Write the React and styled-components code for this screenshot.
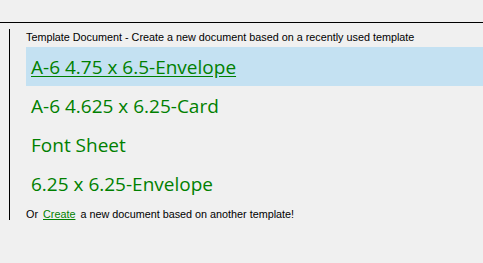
import React from 'react';
import styled, { createGlobalStyle } from 'styled-components';

const GlobalStyle = createGlobalStyle`
  html, body {
    margin: 0;
    padding: 0;
    background: #f0f0f0;
  }
  body {
    font-family: 'Liberation Sans', Arial, sans-serif;
  }
`;

const templates = [
  'A-6 4.75 x 6.5-Envelope',
  'A-6 4.625 x 6.25-Card',
  'Font Sheet',
  '6.25 x 6.25-Envelope',
];

const App = () => {
  return (
    <>
      <GlobalStyle />
      <St.Page>
        <St.TopBar />
        <St.Panel>
          <St.Heading>Template Document - Create a new document based on a recently used template</St.Heading>
          <St.List>
            {templates.map((name, i) => (
              <St.Item key={name} $active={i === 0}>
                <St.ItemLink $active={i === 0}>{name}</St.ItemLink>
              </St.Item>
            ))}
          </St.List>
          <St.Footer>
            Or <St.FooterLink>Create</St.FooterLink> a new document based on another template!
          </St.Footer>
        </St.Panel>
      </St.Page>
    </>
  );
};

export default App;

const St = {
  Page: styled.div`
    width: 483px;
    height: 263px;
    overflow: hidden;
    background: #f0f0f0;
  `,

  TopBar: styled.div`
    height: 22px;
    border-bottom: 1px solid #000000;
  `,

  Panel: styled.section`
    display: flex;
    flex-direction: column;
    margin-top: 6px;
    margin-left: 9px;
    height: 191px;
    border-left: 1px solid #000000;
    padding-left: 16px;
  `,

  Heading: styled.h1`
    margin: 0;
    padding-top: 1px;
    font-family: 'Liberation Sans', Arial, sans-serif;
    font-weight: 400;
    font-size: 10.8px;
    line-height: 15px;
    color: #000000;
    white-space: nowrap;
  `,

  List: styled.ul`
    list-style: none;
    margin: 2px 0 0;
    padding: 0;
    display: flex;
    flex-direction: column;
  `,

  Item: styled.li`
    display: flex;
    align-items: center;
    height: 39px;
    padding-left: 5px;
    background: ${(p) => (p.$active ? '#c4e1f2' : 'transparent')};
  `,

  ItemLink: styled.a`
    font-family: 'Open Sans', sans-serif;
    font-size: 19px;
    color: #008000;
    text-decoration: ${(p) => (p.$active ? 'underline' : 'none')};
    text-underline-offset: 2px;
    white-space: nowrap;
  `,

  Footer: styled.p`
    margin: 4px 0 0;
    font-family: 'Liberation Sans', Arial, sans-serif;
    font-size: 10.8px;
    line-height: 15px;
    color: #000000;
    white-space: nowrap;
  `,

  FooterLink: styled.a`
    color: #008000;
    text-decoration: underline;
    margin: 0 2px;
  `,
};
